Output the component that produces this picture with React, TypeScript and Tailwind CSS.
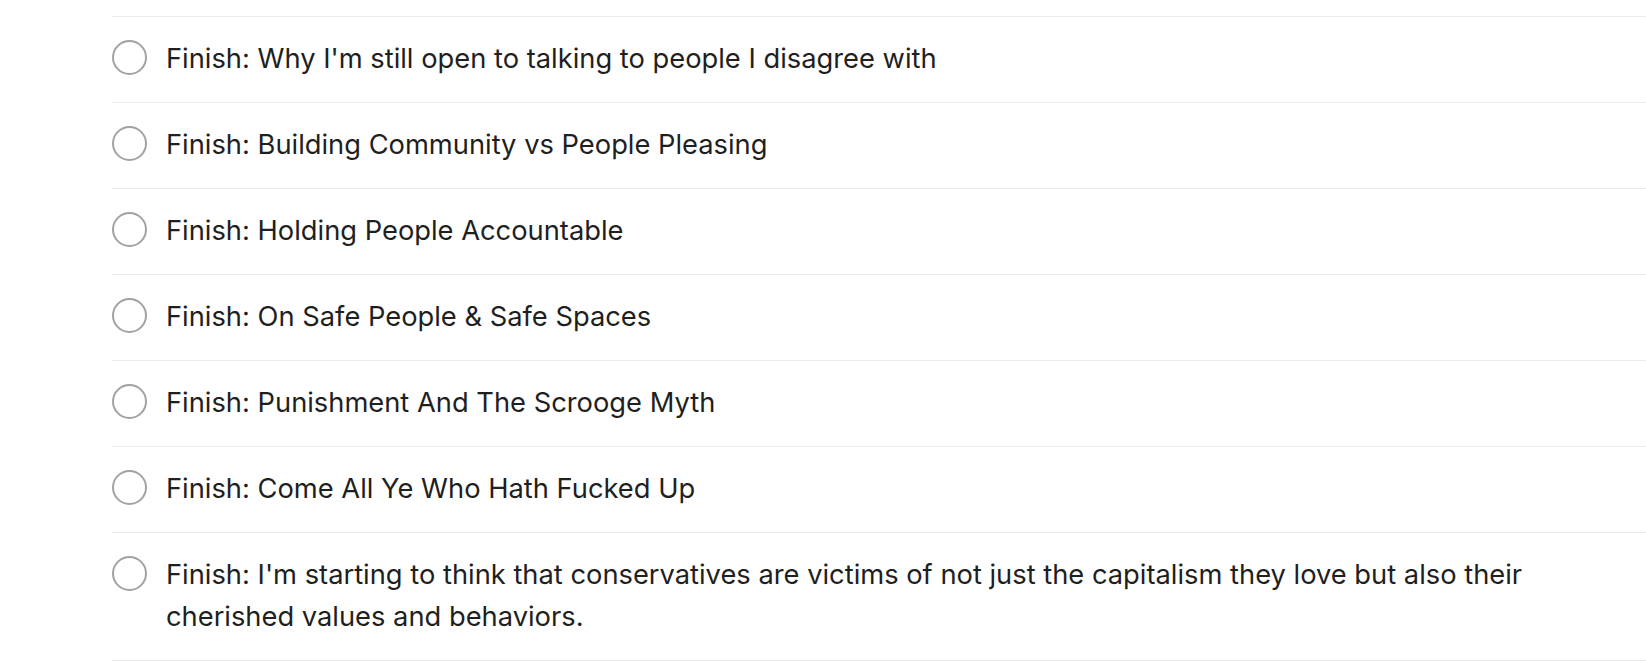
const items = [
  "Finish: Why I'm still open to talking to people I disagree with",
  'Finish: Building Community vs People Pleasing',
  'Finish: Holding People Accountable',
  'Finish: On Safe People & Safe Spaces',
  'Finish: Punishment And The Scrooge Myth',
  'Finish: Come All Ye Who Hath Fucked Up',
  "Finish: I'm starting to think that conservatives are victims of not just the capitalism they love but also their cherished values and behaviors.",
];

function TaskRow({ title }: { title: string }) {
  return (
    <li className="flex items-start gap-[19px] border-b border-[#ebebeb] pt-[21px] pb-[22px] pr-[100px]">
      <span className="mt-[2px] h-[35px] w-[35px] shrink-0 rounded-full border-2 border-[#a2a2a2]" />
      <span className="text-[27.3px] leading-[42px] text-[#1f1f1f]">{title}</span>
    </li>
  );
}

export default function App() {
  return (
    <div
      className="min-h-screen bg-white pl-[112px] pt-[16px]"
      style={{ fontFamily: 'Inter, "Noto Sans", sans-serif' }}
    >
      <ul className="border-t border-[#ebebeb]">
        {items.map((t) => (
          <TaskRow key={t} title={t} />
        ))}
      </ul>
    </div>
  );
}
